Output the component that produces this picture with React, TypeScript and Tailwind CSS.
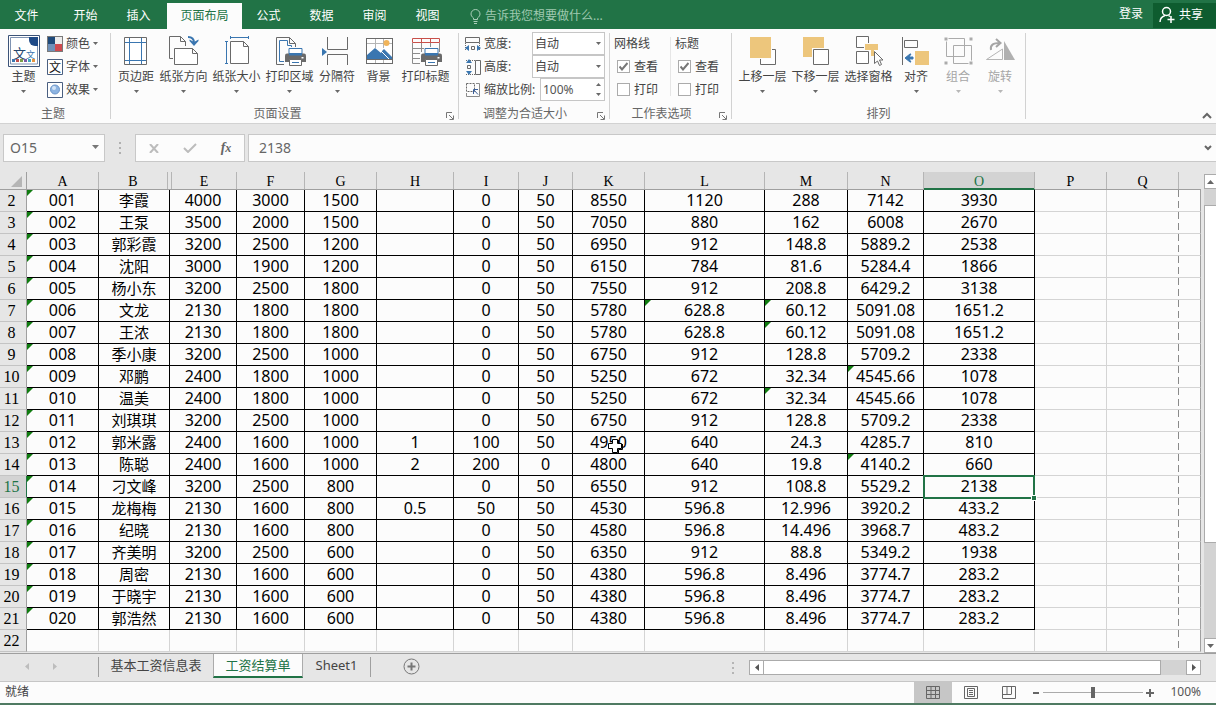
import { useState, type ReactNode } from "react"
import clsx from "clsx"

const columns = [
  { name: "A", width: "w-[72px]" },
  { name: "B", width: "w-[71px]" },
  { name: "E", width: "w-[67px]" },
  { name: "F", width: "w-[68px]" },
  { name: "G", width: "w-[72px]" },
  { name: "H", width: "w-[77px]" },
  { name: "I", width: "w-[65px]" },
  { name: "J", width: "w-[54px]" },
  { name: "K", width: "w-[72px]" },
  { name: "L", width: "w-[120px]" },
  { name: "M", width: "w-[83px]" },
  { name: "N", width: "w-[76px]" },
  { name: "O", width: "w-[111px]" },
  { name: "P", width: "w-[72px]" },
  { name: "Q", width: "w-[72px]" },
  { name: "", width: "" },
]

const LAST_DATA_COL = 12

const rows = [
  ["001", "李霞", "4000", "3000", "1500", "", "0", "50", "8550", "1120", "288", "7142", "3930"],
  ["002", "王泵", "3500", "2000", "1500", "", "0", "50", "7050", "880", "162", "6008", "2670"],
  ["003", "郭彩霞", "3200", "2500", "1200", "", "0", "50", "6950", "912", "148.8", "5889.2", "2538"],
  ["004", "沈阳", "3000", "1900", "1200", "", "0", "50", "6150", "784", "81.6", "5284.4", "1866"],
  ["005", "杨小东", "3200", "2500", "1800", "", "0", "50", "7550", "912", "208.8", "6429.2", "3138"],
  ["006", "文龙", "2130", "1800", "1800", "", "0", "50", "5780", "628.8", "60.12", "5091.08", "1651.2"],
  ["007", "王浓", "2130", "1800", "1800", "", "0", "50", "5780", "628.8", "60.12", "5091.08", "1651.2"],
  ["008", "季小康", "3200", "2500", "1000", "", "0", "50", "6750", "912", "128.8", "5709.2", "2338"],
  ["009", "邓鹏", "2400", "1800", "1000", "", "0", "50", "5250", "672", "32.34", "4545.66", "1078"],
  ["010", "温美", "2400", "1800", "1000", "", "0", "50", "5250", "672", "32.34", "4545.66", "1078"],
  ["011", "刘琪琪", "3200", "2500", "1000", "", "0", "50", "6750", "912", "128.8", "5709.2", "2338"],
  ["012", "郭米露", "2400", "1600", "1000", "1", "100", "50", "4950", "640", "24.3", "4285.7", "810"],
  ["013", "陈聪", "2400", "1600", "1000", "2", "200", "0", "4800", "640", "19.8", "4140.2", "660"],
  ["014", "刁文峰", "3200", "2500", "800", "", "0", "50", "6550", "912", "108.8", "5529.2", "2138"],
  ["015", "龙梅梅", "2130", "1600", "800", "0.5", "50", "50", "4530", "596.8", "12.996", "3920.2", "433.2"],
  ["016", "纪晓", "2130", "1600", "800", "", "0", "50", "4580", "596.8", "14.496", "3968.7", "483.2"],
  ["017", "齐美明", "3200", "2500", "600", "", "0", "50", "6350", "912", "88.8", "5349.2", "1938"],
  ["018", "周密", "2130", "1600", "600", "", "0", "50", "4380", "596.8", "8.496", "3774.7", "283.2"],
  ["019", "于晓宇", "2130", "1600", "600", "", "0", "50", "4380", "596.8", "8.496", "3774.7", "283.2"],
  ["020", "郭浩然", "2130", "1600", "600", "", "0", "50", "4380", "596.8", "8.496", "3774.7", "283.2"],
  [],
]

// cells with the green warning corner, besides column A
const warnings = ["L7", "M7", "M8", "N10", "M11", "N14"]

/* ---------- icons ---------- */

function Svg({ size = 32, children }: { size?: number; children: ReactNode }) {
  return (
    <svg width={size} height={size} viewBox={`0 0 ${size} ${size}`} fill="none" aria-hidden="true" className="shrink-0">
      {children}
    </svg>
  )
}

function Arrow({ className }: { className?: string }) {
  return (
    <svg width="5" height="3" viewBox="0 0 5 3" fill="currentColor" aria-hidden="true" className={clsx("shrink-0 opacity-80", className)}>
      <path d="M0 0h5L2.5 3z" />
    </svg>
  )
}

function Printer() {
  return (
    <g>
      <path d="M10 17h4v-5h15v5h3v14H10z" fill="#fcfcfc" />
      <path d="M15 13.500h13v6H15z" fill="#fff" stroke="#3a76b0" />
      <path d="M13 18.500h17a2 2 0 0 1 2 2V27H11v-6.500a2 2 0 0 1 2-2z" fill="#6a6a6a" />
      <path d="M15 18h13v2.500H15z" fill="#3a76b0" />
      <path d="M27.500 22h2v1.500h-2z" fill="#fff" />
      <path d="M15.500 24.500h12v6h-12z" fill="#fff" stroke="#6a6a6a" />
      <path d="M18 27.500h7" stroke="#3a76b0" />
    </g>
  )
}

function ThemeIcon() {
  return (
    <Svg>
      <path d="M.5.5h31v31H.5z" fill="#fff" stroke="#3c5378" />
      <path d="M2.500 2.500h19l8 8v18.500h-27z" stroke="#7f93b2" />
      <path d="M21 2h9v9h-3a6 6 0 0 1-6-6z" fill="#1f4a87" />
      <text x="5" y="23" fontSize="13" fill="#27476f" fontFamily="Noto Sans CJK SC">文</text>
      <text x="18" y="23" fontSize="9" fill="#3a76b0" fontFamily="Noto Sans CJK SC">文</text>
      <path d="M4 24h3v3H4z" fill="#3a76b0" />
      <path d="M8 24h3v3H8z" fill="#c0504d" />
      <path d="M12 24h3v3h-3z" fill="#7aa04a" />
      <path d="M16 24h3v3h-3z" fill="#7b5aa6" />
      <path d="M20 24h3v3h-3z" fill="#3fa6c0" />
      <path d="M24 24h3v3h-3z" fill="#e79440" />
    </Svg>
  )
}

function ColorsIcon() {
  return (
    <Svg size={16}>
      <path d="M0 0h16v16H0z" fill="#7a7a7a" />
      <path d="M1 1h7v7H1z" fill="#1f4a7a" />
      <path d="M8 1h7v7H8z" fill="#ececec" />
      <path d="M1 8h7v7H1z" fill="#6d8fb8" />
      <path d="M8 8h7v7H8z" fill="#cf4a4f" />
    </Svg>
  )
}

function FontsIcon() {
  return (
    <Svg size={16}>
      <path d="M.5.5h15v15H.5z" fill="#fff" stroke="#4a5f80" />
      <text x="2" y="13" fontSize="12" fill="#111" fontFamily="Noto Sans CJK SC">文</text>
    </Svg>
  )
}

function EffectsIcon() {
  return (
    <Svg size={16}>
      <path d="M.5.5h15v15H.5z" fill="#fff" stroke="#4a5f80" />
      <circle cx="8" cy="7.500" r="4.500" fill="#8db4e2" stroke="#6b95c9" />
      <circle cx="7" cy="6" r="2" fill="#d3e4f7" />
    </Svg>
  )
}

function MarginsIcon() {
  return (
    <Svg>
      <path d="M4.500 2.500h22v27h-22z" fill="#fff" stroke="#6a6a6a" />
      <path d="M9.500 3v26M21.500 3v26M5 7.500h21M5 25.500h21" stroke="#3a76b0" />
    </Svg>
  )
}

function OrientationIcon() {
  return (
    <Svg>
      <path d="M5 23.500H1.500v-22h11l5 5V11M12.500 1.500v5h5" stroke="#6a6a6a" />
      <path d="M6.500 13.500h18l5 5v11h-23zM24.500 13.500v5h5" fill="#fff" stroke="#6a6a6a" />
      <path d="M20 2c4 0 6 2 6 6" stroke="#3a76b0" strokeWidth="2" />
      <path d="M21.500 6l4.500 5 4.500-5v-1.500l-4.500 2.500-4.500-2.500z" fill="#3a76b0" />
    </Svg>
  )
}

function SizeIcon() {
  return (
    <Svg>
      <path d="M9.500 6.500h13l5 5v17h-18zM22.500 6.500v5h5" fill="#fff" stroke="#6a6a6a" />
      <path d="M9 2.500h19M9.500 1v3M27.500 1v3M5.500 6v23M4 6.500h3M4 28.500h3" stroke="#3a76b0" />
    </Svg>
  )
}

function PrintAreaIcon() {
  return (
    <Svg>
      <path d="M12 29.500H2.500v-27h13l6 6V13M15.500 2.500v6h6" stroke="#6a6a6a" />
      <path d="M12 26.500H5.500v-21h8v5h4V13" stroke="#3a76b0" />
      <Printer />
    </Svg>
  )
}

function BreaksIcon() {
  return (
    <Svg>
      <path d="M6.500 2v12.500h20V2M6.500 30V19.500h20V30" stroke="#6a6a6a" />
      <path d="M1 13l5 4-5 4z" fill="#3a76b0" />
    </Svg>
  )
}

function BackgroundIcon() {
  return (
    <Svg>
      <path d="M3.500 3.500h26v25h-26z" fill="#fff" stroke="#6a6a6a" />
      <path d="M4 8.500h25M12.500 4v9M20.500 4v9M4 24.500h25M12.500 24v4M20.500 24v4" stroke="#b5b5b5" />
      <circle cx="23.500" cy="8" r="3" fill="#f0b45a" />
      <path d="M4 20l8-7 6 5 1-2 2-2 8 8v2H4z" fill="#3a76b0" />
      <path d="M17 15l9 9" stroke="#fff" />
      <path d="M3 24.500h27M3.500 3v26M29.500 3v26" stroke="#6a6a6a" />
    </Svg>
  )
}

function PrintTitlesIcon() {
  return (
    <Svg>
      <path d="M2.500 8v20.500h9M3 13.500h26M3 18.500h9M3 23.500h8M11.500 8v10M20.500 8v5M29.500 8v9" stroke="#8c8c8c" />
      <path d="M2.500 3.500h27v4h-27zM11.500 3v5M20.500 3v5" stroke="#c8504a" />
      <Printer />
    </Svg>
  )
}

function ForwardIcon() {
  return (
    <Svg>
      <path d="M13.500 14.500h15v15h-15z" fill="#fff" stroke="#6a6a6a" />
      <path d="M2 1h23v23H2z" fill="#fcfcfc" />
      <path d="M3 2h21v21H3z" fill="#edc67c" />
    </Svg>
  )
}

function BackwardIcon() {
  return (
    <Svg>
      <path d="M3 2h21v20H3z" fill="#edc67c" />
      <path d="M12 13h18v18H12z" fill="#fcfcfc" />
      <path d="M13.500 14.500h15v15h-15z" fill="#fff" stroke="#6a6a6a" />
    </Svg>
  )
}

function SelectionIcon() {
  return (
    <Svg>
      <path d="M3.500 1.500h12v11h-12zM3.500 16.500h12v12h-12z" fill="#fff" stroke="#6a6a6a" />
      <path d="M11 8h15v8H11z" fill="#fcfcfc" />
      <path d="M12 9h13v6h-4v6h-3v-6h-6z" fill="#edc67c" />
      <path d="M21.500 16.500v12l3-2.500 2 4.500 2-1-2-4.500h3.500z" fill="#fff" stroke="#6a6a6a" />
    </Svg>
  )
}

function AlignIcon() {
  return (
    <Svg>
      <path d="M2.500 2v28M4.500 5.500h13v7h-13z" stroke="#6a6a6a" />
      <path d="M15 16h14v14H15z" fill="#edc67c" />
      <path d="M5 23l5-4h1l-2 3h4v2H9l2 3h-1z" fill="#3a76b0" stroke="#3a76b0" />
    </Svg>
  )
}

function GroupIcon() {
  return (
    <Svg>
      <path d="M4.500 3.500h18v18h-18zM11.500 10.500h18v18h-18z" stroke="#ababab" />
      <path d="M2 2h4v4H2zM27 2h4v4h-4zM2 26h4v4H2zM27 26h4v4h-4z" fill="#ababab" stroke="#fcfcfc" />
    </Svg>
  )
}

function RotateIcon() {
  return (
    <Svg>
      <path d="M18.500 14v10.500h-16z" stroke="#b5b5b5" />
      <path d="M20 6v19h11z" fill="#b0b0b0" />
      <path d="M7 15c-1-5 2-7 9-7" stroke="#a5a5a5" strokeWidth="2" />
      <path d="M12 4l4.500 4-4.500 4" stroke="#a5a5a5" strokeWidth="2" />
    </Svg>
  )
}

function FitWidthIcon() {
  return (
    <Svg size={16}>
      <path d="M.5 1.500h14v5H.5z" stroke="#6a6a6a" />
      <path d="M.5 7v8M14.500 7v8" stroke="#6a6a6a" strokeDasharray="1 1" />
      <path d="M0 12l4-3v6zM16 12l-4-3v6z" fill="#3a76b0" />
      <path d="M6.500 10.500h3v3h-3z" stroke="#6a6a6a" />
    </Svg>
  )
}

function FitHeightIcon() {
  return (
    <Svg size={16}>
      <path d="M10.500 1.500h5v14h-5z" stroke="#6a6a6a" />
      <path d="M1 1.500h9M1 15.500h9" stroke="#6a6a6a" strokeDasharray="1 1" />
      <path d="M4 0L1 4h6zM4 16l-3-4h6z" fill="#3a76b0" />
      <path d="M2.500 6.500h3v3h-3z" stroke="#6a6a6a" />
    </Svg>
  )
}

function ScaleIcon() {
  return (
    <Svg size={16}>
      <path d="M1.500 1.500h8v8h-8z" stroke="#6a6a6a" strokeDasharray="2 1" />
      <path d="M11 1.500h3.500v13h-13V11" stroke="#8a8a8a" />
      <path d="M8.500 12V7.500H13M9 8l4 4.500" stroke="#3a5f9a" />
    </Svg>
  )
}

/* ---------- ribbon ---------- */

function BigButton({ icon, label, width, arrow = true, disabled = false }: {
  icon: ReactNode
  label: string
  width: string
  arrow?: boolean
  disabled?: boolean
}) {
  return (
    <button
      type="button"
      disabled={disabled}
      className={clsx("flex shrink-0 flex-col items-center pt-1.5", width, disabled ? "text-[#a6a6a6]" : "text-[#444]")}
    >
      {icon}
      <span className="mt-0.5 leading-4 whitespace-nowrap">{label}</span>
      {arrow && <Arrow className="mt-[5px]" />}
    </button>
  )
}

function SmallButton({ icon, label }: { icon: ReactNode; label: string }) {
  return (
    <button type="button" className="flex h-[23px] items-center gap-[3px]">
      {icon}
      <span>{label}</span>
      <Arrow />
    </button>
  )
}

function Group({ title, launcher = false, className, children }: {
  title: string
  launcher?: boolean
  className?: string
  children: ReactNode
}) {
  return (
    <section className="flex shrink-0">
      <div className={clsx("relative flex flex-col", className)}>
        <div className="flex flex-1">{children}</div>
        <h2 className={clsx("h-[19px] text-center leading-[19px] text-[#666]", launcher ? "pr-[18px]" : "pr-1")}>{title}</h2>
        {launcher && (
          <button type="button" aria-label={`${title}选项`} className="absolute right-1 bottom-[3px]">
            <svg width="8" height="8" viewBox="0 0 8 8" fill="none" stroke="#777" aria-hidden="true">
              <path d="M.5 6V.5H6M3 3l4 4M7.500 3.500v4h-4" />
            </svg>
          </button>
        )}
      </div>
      <div className="mt-1 mb-1 w-px bg-[#d2d2d2]" />
    </section>
  )
}

function FitSelect({ id, label, icon }: { id: string; label: string; icon: ReactNode }) {
  return (
    <div className="flex h-[23px] items-center">
      {icon}
      <label htmlFor={id} className="ml-[3px] flex-1">{label}</label>
      <div className="relative">
        <select id={id} className="h-[23px] w-[73px] appearance-none border border-[#c6c6c6] bg-white pl-0.5 text-[#444]">
          <option>自动</option>
        </select>
        <Arrow className="pointer-events-none absolute top-[10px] right-1" />
      </div>
    </div>
  )
}

function Check({ label, checked = false }: { label: string; checked?: boolean }) {
  return (
    <label className="relative flex h-[23px] items-center gap-1 pl-[3px]">
      <input type="checkbox" defaultChecked={checked} className="peer size-[13px] appearance-none border border-[#ababab] bg-white" />
      <svg width="9" height="9" viewBox="0 0 9 9" fill="none" stroke="#777" strokeWidth="2" aria-hidden="true" className="absolute left-[5px] hidden peer-checked:block">
        <path d="M.5 4.500L3 7.500 8.500 1" />
      </svg>
      {label}
    </label>
  )
}

function Ribbon() {
  return (
    <div className="flex h-[95px] border-b border-[#d2d2d2] bg-[#fcfcfc] text-xs text-[#444]">
      <Group title="主题" className="w-[110px]">
        <BigButton icon={<ThemeIcon />} label="主题" width="w-[47px]" />
        <div className="flex flex-col pt-[3px]">
          <SmallButton icon={<ColorsIcon />} label="颜色" />
          <SmallButton icon={<FontsIcon />} label="字体" />
          <SmallButton icon={<EffectsIcon />} label="效果" />
        </div>
      </Group>
      <Group title="页面设置" launcher className="w-[347px] pl-1">
        <BigButton icon={<MarginsIcon />} label="页边距" width="w-[42px]" />
        <BigButton icon={<OrientationIcon />} label="纸张方向" width="w-[53px]" />
        <BigButton icon={<SizeIcon />} label="纸张大小" width="w-[53px]" />
        <BigButton icon={<PrintAreaIcon />} label="打印区域" width="w-[53px]" />
        <BigButton icon={<BreaksIcon />} label="分隔符" width="w-[42px]" />
        <BigButton icon={<BackgroundIcon />} label="背景" width="w-[41px]" arrow={false} />
        <BigButton icon={<PrintTitlesIcon />} label="打印标题" width="w-[53px]" arrow={false} />
      </Group>
      <Group title="调整为合适大小" launcher className="w-[150px]">
        <div className="flex flex-1 flex-col pt-[3px] pr-1 pl-1.5">
          <FitSelect id="fit-width" label="宽度:" icon={<FitWidthIcon />} />
          <FitSelect id="fit-height" label="高度:" icon={<FitHeightIcon />} />
          <div className="flex h-[23px] items-center">
            <ScaleIcon />
            <label htmlFor="fit-scale" className="ml-[3px] flex-1 whitespace-nowrap">缩放比例:</label>
            <div className="relative">
              <input id="fit-scale" defaultValue="100%" className="h-[23px] w-[65px] border border-[#c6c6c6] bg-white pl-0.5 text-[#555]" />
              <Arrow className="pointer-events-none absolute top-[5px] right-1 rotate-180" />
              <Arrow className="pointer-events-none absolute right-1 bottom-[5px]" />
            </div>
          </div>
        </div>
      </Group>
      <Group title="工作表选项" launcher className="w-[121px] px-1">
        <fieldset className="w-[56px]">
          <legend className="pt-[3px] leading-[23px]">网格线</legend>
          <Check label="查看" checked />
          <Check label="打印" />
        </fieldset>
        <div className="mt-2 mb-2 w-px bg-[#e6e6e6]" />
        <fieldset className="flex-1 pl-1">
          <legend className="pt-[3px] leading-[23px]">标题</legend>
          <Check label="查看" checked />
          <Check label="打印" />
        </fieldset>
      </Group>
      <Group title="排列" className="w-[293px] pl-1">
        <BigButton icon={<ForwardIcon />} label="上移一层" width="w-[53px]" />
        <BigButton icon={<BackwardIcon />} label="下移一层" width="w-[53px]" />
        <BigButton icon={<SelectionIcon />} label="选择窗格" width="w-[53px]" arrow={false} />
        <BigButton icon={<AlignIcon />} label="对齐" width="w-[42px]" />
        <BigButton icon={<GroupIcon />} label="组合" width="w-[42px]" disabled />
        <BigButton icon={<RotateIcon />} label="旋转" width="w-[42px]" disabled />
      </Group>
      <button type="button" aria-label="折叠功能区" className="mt-auto mr-1 mb-1 ml-auto">
        <svg width="10" height="7" viewBox="0 0 10 7" fill="none" stroke="#666" strokeWidth="2" aria-hidden="true">
          <path d="M1 6l4-4 4 4" />
        </svg>
      </button>
    </div>
  )
}

function TitleTabs() {
  const tab = "w-[53px] shrink-0 text-center leading-6 text-white"
  return (
    <header className="flex h-[29px] bg-[#217346] pt-[3px] text-xs">
      <nav className="flex">
        <button type="button" className={clsx(tab, "mr-1.5")}>文件</button>
        <button type="button" className={tab}>开始</button>
        <button type="button" className={tab}>插入</button>
        <button type="button" className="ml-0.5 w-[75px] bg-[#fcfcfc] text-center leading-6 text-[#217346]">页面布局</button>
        <button type="button" className={tab}>公式</button>
        <button type="button" className={tab}>数据</button>
        <button type="button" className={tab}>审阅</button>
        <button type="button" className={tab}>视图</button>
      </nav>
      <button type="button" className="ml-4 flex items-center gap-1 text-[#9fc9b0]">
        <svg width="11" height="15" viewBox="0 0 11 15" fill="none" stroke="#a9cdb8" aria-hidden="true">
          <path d="M3.500 10.500V9C2 8 1 6.500 1 5a4.500 4.500 0 0 1 9 0c0 1.500-1 3-2.500 4v1.500zM3.500 12.500h4M4 14.500h3" />
        </svg>
        告诉我您想要做什么...
      </button>
      <div className="ml-auto flex">
        <button type="button" className="mr-2.5 pb-1 text-white">登录</button>
        <button type="button" className="mb-px flex w-[63px] items-center gap-1 bg-[#0e5c2f] pb-0.5 pl-1.5 text-white">
          <svg width="16" height="17" viewBox="0 0 16 17" fill="none" stroke="#fff" strokeWidth="1.500" aria-hidden="true">
            <circle cx="7.500" cy="5.500" r="4" />
            <path d="M1 16c0-3.500 2-5.500 5-6.500M9.500 9.500l1.500 1M8.500 13.500h7M12 10v7" />
          </svg>
          共享
        </button>
      </div>
    </header>
  )
}

function FormulaBar() {
  return (
    <div className="flex h-12 items-start pt-2.5 pl-[3px] text-sm text-[#666]">
      <div className="relative">
        <input aria-label="名称框" defaultValue="O15" className="h-7 w-[102px] border border-[#c8c8c8] bg-[#fcfcfc] pl-1.5 pb-0.5" />
        <svg width="7" height="4" viewBox="0 0 7 4" fill="#777" aria-hidden="true" className="pointer-events-none absolute top-[11px] right-1.5">
          <path d="M0 0h7L3.500 4z" />
        </svg>
      </div>
      <div className="mx-3.5 flex h-7 w-0.5 flex-col justify-center gap-[3px]">
        <i className="h-0.5 bg-[#b0b0b0]" />
        <i className="h-0.5 bg-[#b0b0b0]" />
        <i className="h-0.5 bg-[#b0b0b0]" />
      </div>
      <div className="flex h-7 w-[110px] items-center border border-[#c8c8c8] bg-[#fcfcfc] pl-0.5">
        <button type="button" aria-label="取消" className="flex w-8 justify-center">
          <svg width="10" height="9" viewBox="0 0 10 9" fill="none" stroke="#bcbcbc" strokeWidth="2" aria-hidden="true">
            <path d="M1 0l8 9M9 0L1 9" />
          </svg>
        </button>
        <button type="button" aria-label="输入" className="flex w-10 justify-center">
          <svg width="14" height="10" viewBox="0 0 14 10" fill="none" stroke="#bcbcbc" strokeWidth="2" aria-hidden="true">
            <path d="M1 5l4 4 8-8" />
          </svg>
        </button>
        <button type="button" aria-label="插入函数" className="w-8 font-['Liberation_Serif',serif] text-sm leading-5 font-bold text-[#666] italic">
          f<span className="text-xs">x</span>
        </button>
      </div>
      <div className="relative ml-[3px] flex-1">
        <input aria-label="编辑栏" defaultValue="2138" className="h-7 w-full border border-r-0 border-[#c8c8c8] bg-[#fcfcfc] pb-0.5 pl-2.5" />
        <svg width="8" height="6" viewBox="0 0 8 6" fill="none" stroke="#666" strokeWidth="2" aria-hidden="true" className="pointer-events-none absolute top-[11px] right-1">
          <path d="M1 1l3 3 3-3" />
        </svg>
      </div>
    </div>
  )
}

/* ---------- sheet ---------- */

function Sheet() {
  const [selected, setSelected] = useState("O15")
  const selectedRow = Number(selected.slice(1))

  return (
    <table className="w-full table-fixed border-separate border-spacing-0 text-center">
      <colgroup>
        <col className="w-[27px]" />
        {columns.map((c, i) => <col key={i} className={c.width} />)}
      </colgroup>
      <thead className="font-['Liberation_Serif',serif] text-sm leading-4 text-black">
        <tr className="h-[18px]">
          <td className="border-r border-b border-[#9f9f9f] p-0">
            <svg width="11" height="11" viewBox="0 0 11 11" fill="#b5b5b5" aria-hidden="true" className="ml-auto mr-1 mt-0.5">
              <path d="M11 0v11H0z" />
            </svg>
          </td>
          {columns.map((c, i) => (
            <th
              key={i}
              scope="col"
              className={clsx(
                "border-b p-0 font-normal",
                selected.startsWith(c.name || "-") ? "border-[#217346] bg-[#d3d3d3] text-[#217346] shadow-[inset_0_-1px_0_#217346]" : "border-[#9f9f9f]",
              )}
            >
              {/* C and D are hidden, so B ends and E starts with a line of its own */}
              <div
                className={clsx(
                  "h-[17px] border-[#b5b5b5] pt-0.5",
                  c.name !== "" && "border-r",
                  c.name === "B" && "mr-0.5",
                  c.name === "E" && "ml-px border-l",
                )}
              >
                {c.name}
              </div>
            </th>
          ))}
        </tr>
      </thead>
      <tbody>
        {rows.map((row, r) => {
          const rowNo = r + 2
          return (
            <tr key={rowNo} className="h-[22px]">
              <th
                scope="row"
                className={clsx(
                  "border-r border-b border-b-[#c4c4c4] p-0 pr-[3px] font-['Liberation_Serif',serif] text-base leading-[21px] font-normal",
                  rowNo === selectedRow ? "border-r-[#217346] bg-[#d3d3d3] text-[#217346]" : "border-r-[#9f9f9f] text-black",
                )}
              >
                {rowNo}
              </th>
              {columns.map((c, i) => {
                const id = c.name + rowNo
                const filled = row.length > 0 && i <= LAST_DATA_COL
                const warn = (c.name === "A" && filled) || warnings.includes(id)
                return (
                  <td
                    key={i}
                    onClick={() => c.name && setSelected(id)}
                    className={clsx(
                      "relative border-b bg-[#fcfcfc] p-0 leading-[21px] whitespace-nowrap text-black",
                      filled ? "border-black" : "border-[#d4d4d4]",
                      c.name === "Q" ? "" : "border-r",
                      c.name === "B" ? "text-[15px]" : "text-base",
                      c.name === "" && "border-r-[#9f9f9f]",
                    )}
                  >
                    {warn && <span className="absolute top-0 left-0 size-[6px] bg-[#107c10] [clip-path:polygon(0_0,100%_0,0_100%)]" />}
                    {row[i]}
                    {c.name === "Q" && (
                      <span className="absolute top-0 right-0 h-[22px] w-px bg-[repeating-linear-gradient(to_bottom,#8a8a8a_0_7px,transparent_7px_11px)]" />
                    )}
                    {id === "K13" && (
                      <svg width="17" height="17" viewBox="0 0 17 17" aria-hidden="true" className="absolute top-1.5 left-[34px] z-10">
                        <path d="M5.500 1.500h5v4h4v5h-4v4h-5v-4h-4v-5h4z" fill="#fff" stroke="#000" />
                        <path d="M11.500 2v3M15.500 6v5.500h-4v4H6" fill="none" stroke="#000" />
                      </svg>
                    )}
                    {selected === id && (
                      <span className="absolute -inset-x-px -top-px -bottom-0.5 z-10 border-2 border-[#217346]">
                        <i className="absolute -right-1 -bottom-1 size-[6px] border border-white bg-[#217346]" />
                      </span>
                    )}
                  </td>
                )
              })}
            </tr>
          )
        })}
      </tbody>
    </table>
  )
}

function VerticalScroll() {
  const button = "flex h-[15px] shrink-0 items-center justify-center border border-r-0 border-[#ababab] bg-white text-[#666]"
  return (
    <div className="flex w-[15px] shrink-0 flex-col pt-0.5 pl-[3px]">
      <button type="button" aria-label="向上滚动" className={button}>
        <svg width="7" height="4" viewBox="0 0 7 4" fill="currentColor" aria-hidden="true"><path d="M0 4h7L3.500 0z" /></svg>
      </button>
      <div className="flex-1 bg-[#d3d3d3] pt-4">
        <div className="h-[78%] border border-r-0 border-[#ababab] bg-white" />
      </div>
      <button type="button" aria-label="向下滚动" className={button}>
        <svg width="7" height="4" viewBox="0 0 7 4" fill="currentColor" aria-hidden="true"><path d="M0 0h7L3.500 4z" /></svg>
      </button>
    </div>
  )
}

function SheetTabs() {
  const scrollButton = "flex w-[15px] shrink-0 items-center justify-center border border-[#ababab] bg-white text-[#555]"
  return (
    <div className="flex h-7 items-start border-t border-[#9f9f9f] text-[13px] text-[#444]">
      <div className="flex h-[25px] w-[98px] items-center gap-6 pl-[25px] text-[#bdbdbd]">
        <button type="button" aria-label="上一张">
          <svg width="4" height="7" viewBox="0 0 4 7" fill="currentColor" aria-hidden="true"><path d="M4 0v7L0 3.500z" /></svg>
        </button>
        <button type="button" aria-label="下一张">
          <svg width="4" height="7" viewBox="0 0 4 7" fill="currentColor" aria-hidden="true"><path d="M0 0v7l4-3.500z" /></svg>
        </button>
      </div>
      <div className="mt-[3px] h-5 w-px bg-[#9f9f9f]" />
      <button type="button" className="w-[114px] leading-[22px]">基本工资信息表</button>
      <button type="button" className="h-6 w-[90px] border-x border-b-2 border-x-[#ababab] border-b-[#217346] bg-[#fcfcfc] leading-[22px] text-[#217346]">工资结算单</button>
      <button type="button" className="w-[67px] leading-[22px]">Sheet1</button>
      <div className="mt-[3px] h-5 w-px bg-[#9f9f9f]" />
      <button type="button" aria-label="新工作表" className="mt-1 ml-8">
        <svg width="17" height="17" viewBox="0 0 17 17" fill="none" stroke="#777" aria-hidden="true">
          <circle cx="8.500" cy="8.500" r="7.500" />
          <path d="M8.500 4.500v8M4.500 8.500h8" strokeWidth="2" />
        </svg>
      </button>
      <div className="mt-2 mr-[15px] ml-auto flex w-0.5 flex-col gap-[3px]">
        <i className="h-0.5 bg-[#b5b5b5]" />
        <i className="h-0.5 bg-[#b5b5b5]" />
        <i className="h-0.5 bg-[#b5b5b5]" />
      </div>
      <div className="mt-1.5 mr-[15px] flex h-[15px] w-[452px]">
        <button type="button" aria-label="向左滚动" className={scrollButton}>
          <svg width="4" height="7" viewBox="0 0 4 7" fill="currentColor" aria-hidden="true"><path d="M4 0v7L0 3.500z" /></svg>
        </button>
        <div className="flex-1 bg-[#d3d3d3]">
          <div className="h-full w-[94%] border border-l-0 border-[#ababab] bg-white" />
        </div>
        <button type="button" aria-label="向右滚动" className={scrollButton}>
          <svg width="4" height="7" viewBox="0 0 4 7" fill="currentColor" aria-hidden="true"><path d="M0 0v7l4-3.500z" /></svg>
        </button>
      </div>
    </div>
  )
}

function StatusBar() {
  const view = "flex h-full w-[38px] items-center justify-center"
  return (
    <footer className="flex h-6 items-center border-t border-b-2 border-t-[#c6c6c6] border-b-[#4f7a62] bg-[#fcfcfc] pr-[15px] pl-[5px] text-xs text-[#444]">
      <span className="mr-auto pb-0.5">就绪</span>
      <button type="button" aria-label="普通" className={clsx(view, "bg-[#c6c6c6]")}>
        <svg width="14" height="13" viewBox="0 0 14 13" fill="none" stroke="#666" aria-hidden="true">
          <path d="M.5.5h13v12H.5zM5 1v11M9.500 1v11M1 4.500h12M1 8.500h12" />
        </svg>
      </button>
      <button type="button" aria-label="页面布局视图" className={view}>
        <svg width="14" height="13" viewBox="0 0 14 13" fill="none" stroke="#666" aria-hidden="true">
          <path d="M.5.5h13v12H.5zM3.500 2.500h7v8h-7zM5 4.500h4M5 6.500h4M5 8.500h4" />
        </svg>
      </button>
      <button type="button" aria-label="分页预览" className={view}>
        <svg width="14" height="13" viewBox="0 0 14 13" fill="none" stroke="#666" aria-hidden="true">
          <path d="M.5.5h13v12H.5zM5 1v7M9.500 1v7M1 8.500h8.500" />
        </svg>
      </button>
      <button type="button" aria-label="缩小" className="ml-1 flex h-4 w-2 items-center justify-center">
        <i className="h-0.5 w-1.5 bg-[#666]" />
      </button>
      <input
        type="range"
        aria-label="缩放"
        min={10}
        max={190}
        defaultValue={100}
        className="mx-[3px] h-3 w-[100px] appearance-none bg-[linear-gradient(#ababab,#ababab)] bg-[length:100%_1px] bg-center bg-no-repeat [&::-webkit-slider-thumb]:h-[11px] [&::-webkit-slider-thumb]:w-1 [&::-webkit-slider-thumb]:appearance-none [&::-webkit-slider-thumb]:bg-[#666]"
      />
      <button type="button" aria-label="放大" className="flex size-2 items-center justify-center">
        <svg width="8" height="8" viewBox="0 0 8 8" stroke="#666" strokeWidth="2" aria-hidden="true"><path d="M0 4h8M4 0v8" /></svg>
      </button>
      <button type="button" className="ml-4 pb-0.5 text-[#555]">100%</button>
    </footer>
  )
}

export default function App() {
  return (
    <div className="flex min-h-screen flex-col overflow-hidden bg-[#e6e6e6] font-['Noto_Sans','Noto_Sans_CJK_SC',sans-serif]">
      <TitleTabs />
      <Ribbon />
      <FormulaBar />
      <main className="flex flex-1">
        <div className="min-w-0 flex-1">
          <Sheet />
        </div>
        <VerticalScroll />
      </main>
      <SheetTabs />
      <StatusBar />
    </div>
  )
}
